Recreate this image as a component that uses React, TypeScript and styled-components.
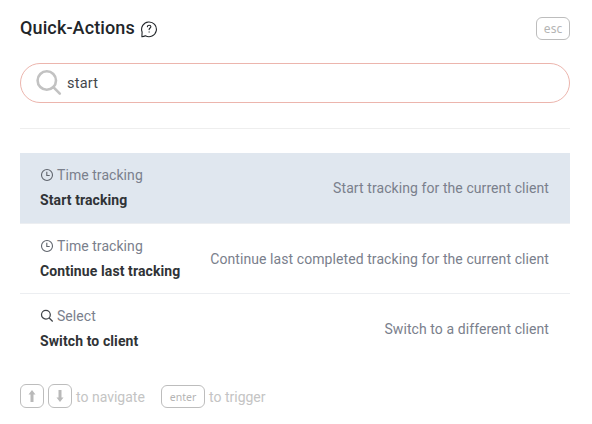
import React from "react";
import styled, { createGlobalStyle } from "styled-components";

const GlobalStyle = createGlobalStyle`
  *, *::before, *::after { box-sizing: border-box; }
  body {
    margin: 0;
    background: #fff;
    font-family: Roboto, "Noto Sans", sans-serif;
    overflow: hidden;
  }
  svg { display: block; flex: none; }
`;

const Dialog = styled.main`
  display: flex;
  flex-direction: column;
  width: 592px;
  height: 424px;
  padding: 17px 22px 0 20px;
  background: #fff;
`;

const Header = styled.header`
  display: flex;
  justify-content: space-between;
  height: 46px;
`;

const TitleGroup = styled.div`
  display: flex;
  align-items: flex-start;
  gap: 5px;
  svg { margin-top: 3px; }
`;

const Title = styled.h1`
  margin: 0;
  color: #212529;
  font-size: 18px;
  font-weight: 500;
  line-height: 22px;
  letter-spacing: 0.12px;
  white-space: nowrap;
`;

const Key = styled.kbd<{ $width: number; $height?: number; $size?: number }>`
  display: flex;
  flex: none;
  align-items: center;
  justify-content: center;
  width: ${(p) => p.$width}px;
  height: ${(p) => p.$height ?? 24}px;
  border: 1px solid #bdbdbd;
  border-radius: 6px;
  color: #b4b4b4;
  font-family: "Noto Sans", sans-serif;
  font-size: ${(p) => p.$size ?? 11}px;
  line-height: 20px;
`;

const SearchField = styled.label`
  display: flex;
  flex: none;
  align-items: center;
  height: 40px;
  padding-left: 14px;
  border: 1px solid #ecb5ad;
  border-radius: 20px;
`;

const SearchInput = styled.input`
  flex: 1;
  min-width: 0;
  margin-left: 4px;
  padding: 2px 0 0;
  border: 0;
  outline: 0;
  background: none;
  color: #43474b;
  font: 400 14.5px/20px Roboto, sans-serif;
  letter-spacing: 0.2px;
`;

const Divider = styled.hr`
  flex: none;
  width: 100%;
  height: 1px;
  margin: 25px 0 24px;
  border: 0;
  background: #eeeeee;
`;

const ActionList = styled.ul`
  flex: none;
  margin: 0;
  padding: 0;
  list-style: none;
`;

const Action = styled.li<{ $active?: boolean }>`
  display: flex;
  align-items: center;
  justify-content: space-between;
  height: ${(p) => (p.$active ? 71 : 70)}px;
  padding: 0 21px 0 20px;
  border-bottom: 1px solid #eceef1;
  background: ${(p) => (p.$active ? "#e0e7ef" : "transparent")};
  background-clip: padding-box;
  &:last-child { border-bottom-color: transparent; }
`;

const Category = styled.div<{ $raised?: boolean }>`
  display: flex;
  align-items: center;
  gap: 3px;
  height: 25px;
  padding-bottom: ${(p) => (p.$raised ? 2 : 0)}px;
  color: #7a808c;
  font-size: 14px;
  letter-spacing: 0.06px;
  white-space: nowrap;
`;

const Name = styled.div`
  height: 25px;
  color: #303336;
  font-size: 14px;
  font-weight: 700;
  line-height: 25px;
  letter-spacing: 0.1px;
  white-space: nowrap;
`;

const Description = styled.div`
  color: #7a808c;
  font-size: 14px;
  line-height: 20px;
  letter-spacing: 0.08px;
  white-space: nowrap;
`;

const Footer = styled.footer`
  display: flex;
  align-items: center;
  height: 24px;
  margin-top: 20px;
`;

const Hint = styled.span<{ $width: number }>`
  flex: none;
  width: ${(p) => p.$width}px;
  margin-left: 4px;
  padding-top: 1px;
  color: #c4c4c4;
  font-size: 14px;
  line-height: 24px;
  white-space: nowrap;
`;

const KeyPair = styled.div`
  display: flex;
  gap: 4px;
`;

const EnterKey = styled(Key)`
  align-self: flex-end;
`;

const HelpIcon = () => (
  <svg width="18" height="18" viewBox="0 0 18 18" fill="none" stroke="#212529" strokeWidth="1.1" strokeLinecap="round" strokeLinejoin="round">
    <path d="M1.9 16.7 2.1 12A7.4 7.4 0 1 1 5.4 15.8C4.3 16.5 3.1 16.7 1.9 16.7Z" />
    <path d="M7.4 6.8c0-1 .7-1.6 1.7-1.6s1.8.6 1.8 1.5c0 1.2-1.8 1.4-1.8 2.9" />
    <path d="M9.1 11.9v.2" />
  </svg>
);

const SearchIcon = () => (
  <svg width="28" height="28" viewBox="0 0 28 28" fill="none" stroke="#c2c2c2" strokeWidth="2.6" strokeLinecap="round">
    <circle cx="11.8" cy="11.5" r="9.2" />
    <path d="m18.6 18.3 6.2 6.3" />
  </svg>
);

const ClockIcon = () => (
  <svg width="14" height="14" viewBox="0 0 14 14" fill="none" stroke="#5f646c" strokeWidth="1.1">
    <circle cx="7" cy="7" r="5.5" />
    <path d="M6.8 3.8v3.7h2.9" />
  </svg>
);

const SelectIcon = () => (
  <svg width="14" height="14" viewBox="0 0 14 14" fill="none" stroke="#404449" strokeWidth="1.25">
    <circle cx="5.9" cy="5.7" r="4.4" />
    <path d="m9.2 9 3.5 3.5" />
  </svg>
);

const ArrowIcon = ({ down }: { down?: boolean }) => (
  <svg width="10" height="14" viewBox="0 0 10 14" fill="#b9b9b9">
    <path d={down ? "M3.5 1h3v7.5h2L5 13 1.5 8.5h2z" : "M5 1l3.5 4.5h-2V13h-3V5.5h-2z"} />
  </svg>
);

const actions = [
  { category: "Time tracking", name: "Start tracking", text: "Start tracking for the current client", active: true, icon: <ClockIcon /> },
  { category: "Time tracking", name: "Continue last tracking", text: "Continue last completed tracking for the current client", icon: <ClockIcon /> },
  { category: "Select", name: "Switch to client", text: "Switch to a different client", icon: <SelectIcon /> },
];

export default function App() {
  return (
    <>
      <GlobalStyle />
      <Dialog>
        <Header>
          <TitleGroup>
            <Title>Quick-Actions</Title>
            <HelpIcon />
          </TitleGroup>
          <Key $width={34} $height={23} $size={12}>esc</Key>
        </Header>
        <SearchField>
          <SearchIcon />
          <SearchInput defaultValue="start" aria-label="Search actions" />
        </SearchField>
        <Divider />
        <ActionList>
          {actions.map((a) => (
            <Action key={a.name} $active={a.active}>
              <div>
                <Category $raised={a.active}>{a.icon}<span>{a.category}</span></Category>
                <Name>{a.name}</Name>
              </div>
              <Description>{a.text}</Description>
            </Action>
          ))}
        </ActionList>
        <Footer>
          <KeyPair>
            <Key $width={24}><ArrowIcon /></Key>
            <Key $width={24}><ArrowIcon down /></Key>
          </KeyPair>
          <Hint $width={85}>to navigate</Hint>
          <EnterKey $width={44} $height={23} $size={10.5}>enter</EnterKey>
          <Hint $width={70}>to trigger</Hint>
        </Footer>
      </Dialog>
    </>
  );
}
